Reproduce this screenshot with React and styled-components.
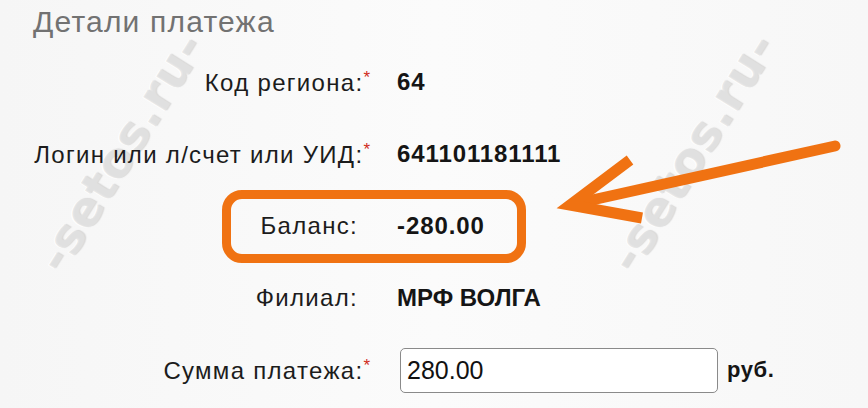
import React from 'react';
import styled, { createGlobalStyle } from 'styled-components';

const GlobalStyle = createGlobalStyle`
  html, body {
    margin: 0;
    padding: 0;
    background: #f9f9f9;
  }
  body {
    font-family: 'Liberation Sans', Arial, sans-serif;
  }
`;

const Page = styled.div`
  position: relative;
  width: 868px;
  height: 408px;
  overflow: hidden;
  background: linear-gradient(90deg, #f6f6f6 0%, #fbfbfb 50%, #f7f7f7 100%);
  box-sizing: border-box;
  padding: 4px 0 0 33px;
`;

const Title = styled.h2`
  position: relative;
  z-index: 1;
  margin: 0;
  font-weight: normal;
  font-size: 30px;
  line-height: 36px;
  letter-spacing: 1.2px;
  color: #727272;
`;

const Form = styled.div`
  position: relative;
  z-index: 1;
  display: grid;
  grid-template-columns: 337px auto;
  grid-auto-rows: 72px;
  column-gap: 27px;
  align-items: center;
  margin-top: 6px;
`;

const Label = styled.div`
  text-align: right;
  font-size: 24px;
  letter-spacing: 1.3px;
  color: #1c1c1c;
  white-space: nowrap;
  padding-right: ${p => (p.$required ? '0' : '12px')};
`;

const Star = styled.span`
  color: #d02a20;
  font-size: 17px;
  vertical-align: 8px;
  letter-spacing: 0;
`;

const Value = styled.div`
  font-size: 24px;
  font-weight: bold;
  letter-spacing: ${p => (p.$digits ? '0.9px' : '0')};
  color: #151515;
  white-space: nowrap;
  display: flex;
  align-items: center;
  gap: 9px;
`;

const AmountInput = styled.input`
  width: 318px;
  height: 45px;
  box-sizing: border-box;
  border: 1px solid #8a8a8a;
  border-radius: 5px;
  background: #fff;
  padding: 0 6px;
  margin-left: 3px;
  font-family: 'Liberation Sans', Arial, sans-serif;
  font-size: 25px;
  color: #111;
  outline: none;
`;

const Currency = styled.span`
  font-size: 22px;
  font-weight: bold;
  letter-spacing: 0.6px;
`;

const Highlight = styled.div`
  position: absolute;
  z-index: 2;
  left: 222px;
  top: 190px;
  width: 304px;
  height: 73px;
  box-sizing: border-box;
  border: 9px solid #f07212;
  border-radius: 20px;
  pointer-events: none;
`;

const Mark = styled.div`
  position: absolute;
  z-index: 0;
  left: ${p => p.$x}px;
  top: ${p => p.$y}px;
  transform: translate(-50%, -50%) rotate(-58deg);
  font-size: 48px;
  font-weight: bold;
  font-family: 'DejaVu Sans', sans-serif;
  letter-spacing: 1px;
  color: rgba(226, 226, 226, 0.8);
  text-shadow: 1px 1px 1px rgba(170, 170, 170, 0.4), -1px -1px 0 rgba(255, 255, 255, 0.8);
  white-space: nowrap;
  pointer-events: none;
`;

const Arrow = styled.svg`
  position: absolute;
  z-index: 2;
  left: 0;
  top: 0;
  pointer-events: none;
`;

const rows = [
  { label: 'Код региона:', required: true, value: '64', digits: true },
  { label: 'Логин или л/счет или УИД:', required: true, value: '641101181111', digits: true },
  { label: 'Баланс:', value: '-280.00', digits: true },
  { label: 'Филиал:', value: 'МРФ ВОЛГА' },
];

export default function App() {
  return (
    <>
      <GlobalStyle />
      <Page>
        <Mark $x={120} $y={152}>-setos.ru-</Mark>
        <Mark $x={692} $y={152}>-setos.ru-</Mark>
        <Title>Детали платежа</Title>
        <Form>
          {rows.map(r => (
            <React.Fragment key={r.label}>
              <Label $required={r.required}>
                {r.label}
                {r.required && <Star>*</Star>}
              </Label>
              <Value $digits={r.digits}>{r.value}</Value>
            </React.Fragment>
          ))}
          <Label $required>
            Сумма платежа:
            <Star>*</Star>
          </Label>
          <Value>
            <AmountInput defaultValue="280.00" />
            <Currency>руб.</Currency>
          </Value>
        </Form>
        <Highlight />
        <Arrow width="868" height="408" viewBox="0 0 868 408">
          <g stroke="#f07212" strokeWidth="11" fill="none" strokeLinejoin="miter">
            <line x1="835" y1="146" x2="574" y2="204" strokeLinecap="round" />
            <polyline points="630,160 570,205 642,218" strokeLinecap="butt" />
          </g>
        </Arrow>
      </Page>
    </>
  );
}
